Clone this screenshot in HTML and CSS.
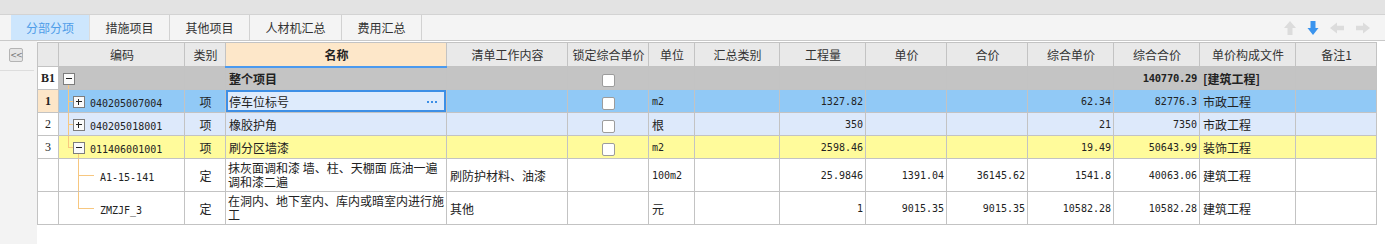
FILE: index.html
```html
<!DOCTYPE html>
<html lang="zh-CN">
<head>
  <meta charset="UTF-8" />
  <title>分部分项</title>
  <link rel="stylesheet" href="styles.css">
</head>
<body>
  <div class="topstrip"></div>

  <div class="tabbar">
    <div class="tabs">
      <div class="tab active">分部分项</div>
      <div class="tab">措施项目</div>
      <div class="tab">其他项目</div>
      <div class="tab wide">人材机汇总</div>
      <div class="tab">费用汇总</div>
    </div>
    <div class="nav-arrows">
      <svg width="14" height="16" viewBox="0 0 14 16"><polygon points="7,1 13,8 9.5,8 9.5,15 4.5,15 4.5,8 1,8" fill="#dcdcdc"/></svg>
      <svg width="12" height="16" viewBox="0 0 12 16"><polygon points="6,15 11.5,8 8.5,8 8.5,1 3.5,1 3.5,8 0.5,8" fill="#3a94ee"/></svg>
      <svg width="16" height="12" viewBox="0 0 16 12"><polygon points="1,6 8,0.5 8,3.8 15,3.8 15,8.2 8,8.2 8,11.5" fill="#dcdcdc"/></svg>
      <svg width="16" height="12" viewBox="0 0 16 12"><polygon points="15,6 8,0.5 8,3.8 1,3.8 1,8.2 8,8.2 8,11.5" fill="#dcdcdc"/></svg>
    </div>
  </div>

  <div class="main">
    <div class="side">
      <div class="side-top"><span class="collapse">&lt;&lt;</span></div>
    </div>

    <div class="grid-wrap">
      <table class="grid">
        <colgroup>
          <col style="width:21px"><col style="width:126px"><col style="width:41px"><col style="width:221px">
          <col style="width:121px"><col style="width:81px"><col style="width:46px"><col style="width:85px">
          <col style="width:86px"><col style="width:81px"><col style="width:81px"><col style="width:86px">
          <col style="width:86px"><col style="width:96px"><col style="width:81px">
        </colgroup>
        <thead>
          <tr>
            <th></th>
            <th>编码</th>
            <th>类别</th>
            <th class="focus">名称</th>
            <th>清单工作内容</th>
            <th>锁定综合单价</th>
            <th>单位</th>
            <th>汇总类别</th>
            <th>工程量</th>
            <th>单价</th>
            <th>合价</th>
            <th>综合单价</th>
            <th>综合合价</th>
            <th>单价构成文件</th>
            <th>备注1</th>
          </tr>
        </thead>
        <tbody>
          <tr class="r-root">
            <td class="rh strong">B1</td>
            <td class="code"><i class="ln v1 below"></i><span class="box root minus"></span></td>
            <td></td>
            <td class="bold">整个项目</td>
            <td></td>
            <td class="c"><span class="chk"></span></td>
            <td></td><td></td><td></td><td></td><td></td><td></td>
            <td class="num bold">140770.29</td>
            <td class="bold">[建筑工程]</td>
            <td></td>
          </tr>
          <tr class="r-sel">
            <td class="rh strong cur">1</td>
            <td class="code"><i class="ln v1 full"></i><i class="ln h1"></i><span class="box plus"></span><span class="mono">040205007004</span></td>
            <td class="c">项</td>
            <td class="edit">停车位标号<span class="more"><i></i><i></i><i></i></span></td>
            <td></td>
            <td class="c"><span class="chk"></span></td>
            <td class="mono">m2</td>
            <td></td>
            <td class="num">1327.82</td>
            <td></td><td></td>
            <td class="num">62.34</td>
            <td class="num">82776.3</td>
            <td>市政工程</td>
            <td></td>
          </tr>
          <tr class="r-light">
            <td class="rh">2</td>
            <td class="code"><i class="ln v1 full"></i><i class="ln h1"></i><span class="box plus"></span><span class="mono">040205018001</span></td>
            <td class="c">项</td>
            <td>橡胶护角</td>
            <td></td>
            <td class="c"><span class="chk"></span></td>
            <td>根</td>
            <td></td>
            <td class="num">350</td>
            <td></td><td></td>
            <td class="num">21</td>
            <td class="num">7350</td>
            <td>市政工程</td>
            <td></td>
          </tr>
          <tr class="r-yellow">
            <td class="rh">3</td>
            <td class="code"><i class="ln v1 half"></i><i class="ln h1"></i><i class="ln v2 below"></i><span class="box minus"></span><span class="mono">011406001001</span></td>
            <td class="c">项</td>
            <td>刷分区墙漆</td>
            <td></td>
            <td class="c"><span class="chk"></span></td>
            <td class="mono">m2</td>
            <td></td>
            <td class="num">2598.46</td>
            <td></td><td></td>
            <td class="num">19.49</td>
            <td class="num">50643.99</td>
            <td>装饰工程</td>
            <td></td>
          </tr>
          <tr class="r-tall">
            <td class="rh"></td>
            <td class="code child"><i class="ln v2 full"></i><i class="ln h2"></i><span class="mono">A1-15-141</span></td>
            <td class="c">定</td>
            <td class="wrap">抹灰面调和漆 墙、柱、天棚面 底油一遍调和漆二遍</td>
            <td>刷防护材料、油漆</td>
            <td></td>
            <td class="mono">100m2</td>
            <td></td>
            <td class="num">25.9846</td>
            <td class="num">1391.04</td>
            <td class="num">36145.62</td>
            <td class="num">1541.8</td>
            <td class="num">40063.06</td>
            <td>建筑工程</td>
            <td></td>
          </tr>
          <tr class="r-tall">
            <td class="rh"></td>
            <td class="code child"><i class="ln v2 half"></i><i class="ln h2"></i><span class="mono">ZMZJF_3</span></td>
            <td class="c">定</td>
            <td class="wrap">在洞内、地下室内、库内或暗室内进行施工</td>
            <td>其他</td>
            <td></td>
            <td>元</td>
            <td></td>
            <td class="num">1</td>
            <td class="num">9015.35</td>
            <td class="num">9015.35</td>
            <td class="num">10582.28</td>
            <td class="num">10582.28</td>
            <td>建筑工程</td>
            <td></td>
          </tr>
        </tbody>
      </table>
    </div>
  </div>
</body>
</html>
```

FILE: styles.css
```css
* {
  box-sizing: border-box;
}

body {
  margin: 0;
  width: 1385px;
  height: 244px;
  overflow: hidden;
  font-family: "Noto Sans CJK SC", "Liberation Sans", sans-serif;
  font-size: 12px;
  color: #222;
  background: #fff;
}

.topstrip {
  height: 15px;
  background: #e3e3e3;
  border-bottom: 1px solid #d3d3d3;
}

.tabbar {
  height: 26px;
  background: #f4f4f4;
  border-bottom: 1px solid #c9c9c9;
  display: flex;
  justify-content: space-between;
  padding-left: 11px;
}

.tabs {
  display: flex;
}

.tab {
  flex: 0 0 80px;
  display: flex;
  align-items: center;
  justify-content: center;
  border-right: 1px solid #d2d2d2;
  color: #333;
  font-size: 12px;
}

.tab.wide {
  flex-basis: 92px;
}

.tab.active {
  flex-basis: 79px;
  background: #cde6fd;
  color: #4f9de8;
  border-right-color: #dcdcdc;
}

.nav-arrows {
  display: flex;
  align-items: center;
  gap: 10px;
  padding-right: 14px;
}

.main {
  display: flex;
  height: 203px;
}

.side {
  flex: 0 0 37px;
  background: #f3f3f3;
}

.side-top {
  height: 30px;
  margin-right: 3px;
  border-bottom: 1px solid #dddddd;
  padding: 7px 0 0 9px;
}

.collapse {
  display: flex;
  align-items: center;
  justify-content: center;
  width: 14px;
  height: 14px;
  border: 1px solid #b4b4b4;
  border-radius: 2px;
  background: #e6e6e6;
  color: #777;
  font-family: "DejaVu Sans", sans-serif;
  font-size: 8px;
  letter-spacing: -1px;
}

.grid-wrap {
  flex: 1;
  background: #fff;
  padding-top: 1px;
}

.grid {
  border-collapse: collapse;
  table-layout: fixed;
  width: 1340px;
}

.grid th,
.grid td {
  border: 1px solid #c3c3c3;
  padding: 0 2px 0 3px;
  white-space: nowrap;
  overflow: hidden;
  font-weight: normal;
}

.grid th {
  height: 24px;
  background: #e9e9e9;
  color: #333;
  text-align: center;
}

.grid th.focus {
  background: #fde7c9;
  border-bottom: 2px solid #4a9af0;
  font-weight: bold;
  color: #222;
}

.grid td {
  height: 23px;
}

.r-root td { background: #c4c4c4; }
.r-sel td { background: #91c9f6; }
.r-light td { background: #dde9fb; }
.r-yellow td { background: #fffb9b; }
.r-tall td { height: 33px; }

.grid td.rh {
  background: #fff;
  text-align: center;
  padding: 0;
  font-family: "Liberation Serif", serif;
  font-size: 12px;
}

.grid td.rh.strong { font-weight: bold; }
.grid td.rh.cur { background: #fde6c8; }

.c { text-align: center; }
.grid td.bold { font-weight: bold; }

.mono {
  font-family: "DejaVu Sans Mono", monospace;
  font-size: 10px;
}

.num {
  font-family: "DejaVu Sans Mono", monospace;
  font-size: 10px;
  text-align: right;
}

.grid td.num.bold {
  font-size: 10.5px;
  letter-spacing: -0.3px;
}

.wrap {
  white-space: normal !important;
  line-height: 14px;
  padding-left: 2px !important;
  padding-right: 0 !important;
  word-break: break-all;
}

.grid td.edit {
  background: #deebfc;
  box-shadow: inset 0 0 0 2px #3d8fe6;
  position: relative;
}

.more {
  position: absolute;
  right: 9px;
  top: 11px;
  display: flex;
  gap: 2px;
}

.more i {
  width: 2px;
  height: 2px;
  background: #3d8fe6;
}

.code {
  position: relative;
  padding-left: 14px !important;
}

.code .mono {
  margin-left: 5px;
}

.code.child {
  padding-left: 41px !important;
}

.code.child .mono {
  margin-left: 0;
}

.ln {
  position: absolute;
  background: #f7c780;
}

.v1 { left: 9px; width: 1px; }
.v2 { left: 19px; width: 1px; }
.full { top: 0; bottom: 0; }
.half { top: 0; height: 50%; }
.below { top: 50%; bottom: 0; }
.h1 { left: 9px; width: 5px; top: 50%; height: 1px; }
.h2 { left: 19px; width: 16px; top: 50%; height: 1px; }

.box {
  position: relative;
  display: inline-block;
  vertical-align: middle;
  width: 12px;
  height: 12px;
  border: 1px solid #7d7d7d;
  background: #fafafa;
  margin-top: -2px;
}

.box.root {
  margin-left: -10px;
}

.box::before {
  content: "";
  position: absolute;
  left: 2px;
  right: 2px;
  top: 4px;
  height: 1px;
  background: #222;
}

.box.plus::after {
  content: "";
  position: absolute;
  top: 2px;
  bottom: 2px;
  left: 4px;
  width: 1px;
  background: #222;
}

.chk {
  display: inline-block;
  vertical-align: middle;
  width: 13px;
  height: 13px;
  border: 1px solid #9c9c9c;
  border-radius: 2px;
  background: #fff;
}
```
